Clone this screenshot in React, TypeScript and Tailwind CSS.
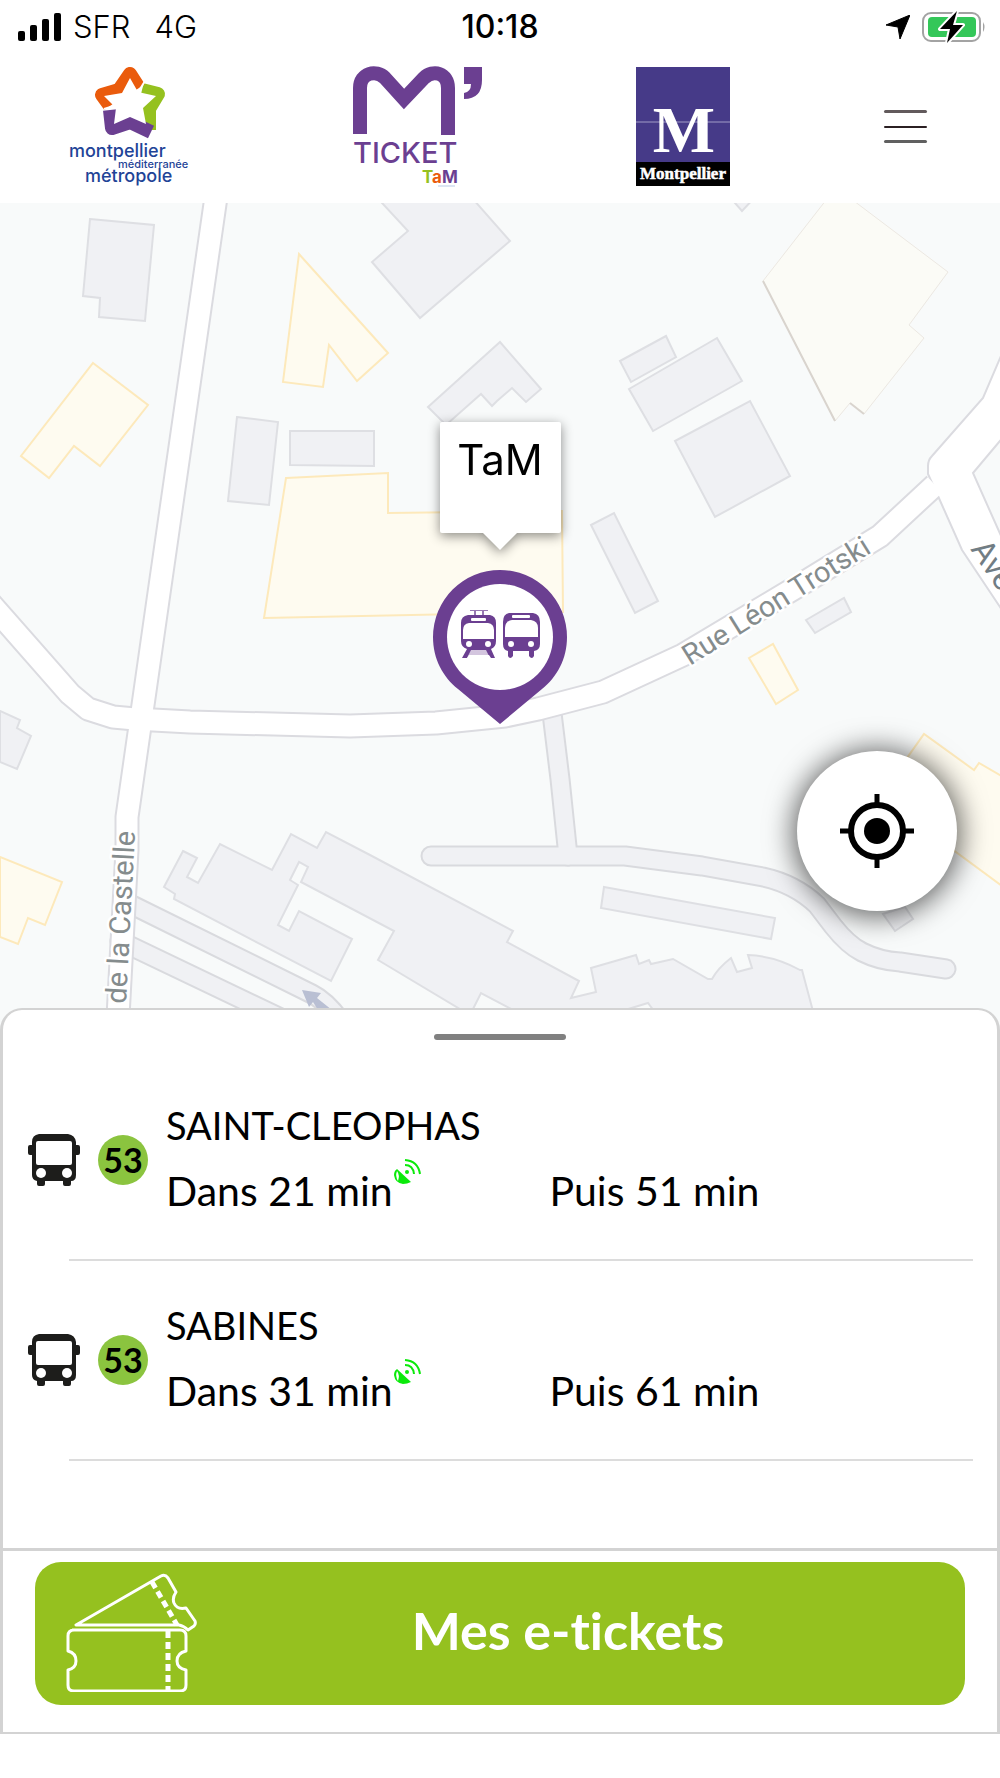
/**
 * Stop details screen: map with the selected stop on top, next
 * departures in a bottom sheet and the e-ticket shortcut below.
 */
interface Departure {
  id: string;
  line: string;
  destination: string;
  next: number;
  following: number;
}

const departures: Departure[] = [
  { id: 'saint-cleophas', line: '53', destination: 'SAINT-CLEOPHAS', next: 21, following: 51 },
  { id: 'sabines', line: '53', destination: 'SABINES', next: 31, following: 61 },
];

const greyBuildings = [
  'M90 219 L154 225 L145 321 L99 317 L100 298 L83 296 Z',
  'M370 190 L408 231 L372 262 L420 318 L510 241 L465 190 Z',
  'M237 417 L278 422 L269 505 L228 501 Z',
  'M290 431 H374 V466 L290 465 Z',
  'M428 407 L500 342 L541 389 L526 402 L512 388 L497 401 L492 406 L481 394 L446 425 Z',
  'M620 361 L666 336 L676 357 L631 382 Z',
  'M629 389 L717 338 L742 381 L653 431 Z',
  'M675 441 L750 401 L790 476 L715 517 Z',
  'M591 525 L614 513 L658 601 L635 613 Z',
  'M728 195 L742 211 L757 195 Z',
  'M806 620 L844 598 L851 612 L815 633 Z',
  'M0 711 L20 720 L17 728 L31 736 L17 769 L0 762 Z',
  'M604 887 L775 918 L771 939 L601 908 Z',
  'M883 914 L905 907 L913 919 L895 931 Z',
  'M183 851 L197 858 L187 877 L198 883 L220 844 L272 870 L291 834 L317 848 L326 832 L370 855 L513 931 L507 942 L579 981 L571 998 L596 992 L591 968 L636 955 L639 964 L649 960 L651 964 L673 959 L708 979 L712 979 Q718 968 731 958 L737 972 L752 968 L748 955 Q775 956 800 970 L802 970 L814 1015 H657 L648 1003 L625 1010 H513 L481 993 L470 1015 L378 960 L394 931 L301 882 L308 867 L299 862 L290 880 L298 885 L278 925 L289 931 L299 911 L352 939 L331 981 L174 899 L175 894 L164 887 Z',
];

const yellowBuildings = [
  'M93 363 L148 405 L100 466 L74 446 L49 478 L21 456 Z',
  'M299 254 L388 353 L357 381 L329 345 L323 387 L283 382 Z',
  'M286 478 L388 473 V513 L562 511 L563 612 L264 618 Z',
  'M749 658 L773 644 L798 690 L776 704 Z',
  'M0 857 L62 882 L45 925 L28 918 L18 944 L0 937 Z',
  'M1010 781 L979 763 L974 770 L924 734 L880 796 L1010 892 Z',
];

const mainRoads = [
  'M217 190 L158 600 L127 817 V850 L117 1035',
  'M-10 603 L70 694 L88 709 L113 717 L135 719 L190 722 L350 726 L436 723 L505 716 L538 709 L603 692 L683 655 L800 585 L880 536 L935 485',
];

const minorRoads = [
  'M551 705 L560 779 L568 856',
  'M431 856 H625 L702 866 L763 877 Q795 884 817 905 L833 926 Q848 945 862 952 Q880 961 900 962 L946 969',
  'M130 904 L312 994 Q326 1001 340 1020',
  'M120 941 L285 1020',
];

function StreetMap() {
  return (
    <svg
      viewBox="0 203 1000 827"
      preserveAspectRatio="xMidYMid slice"
      className="block w-full h-full"
      role="img"
      aria-label="Plan du quartier"
    >
      <rect x="-500" y="0" width="2000" height="1300" fill="#f8fafa" />
      <g fill="#f0f1f4" stroke="#dedfe3" strokeWidth="2">
        {greyBuildings.map((d) => (
          <path key={d} d={d} />
        ))}
      </g>
      <g fill="#fefbf0" stroke="#fde9bb" strokeWidth="2">
        {yellowBuildings.map((d) => (
          <path key={d} d={d} />
        ))}
      </g>
      <path
        d="M830 195 L763 281 L835 421 L850 403 L864 414 L924 338 L909 325 L948 272 L850 198 Z"
        fill="#fbfbf6"
        stroke="#ece8e2"
        strokeWidth="1"
      />
      <path d="M763 281 L835 421 M850 403 L864 414" fill="none" stroke="#d9d4ce" strokeWidth="2" />

      <g fill="none" strokeLinecap="round" strokeLinejoin="round">
        {minorRoads.map((d) => (
          <path key={d} d={d} stroke="#d9dade" strokeWidth="21" />
        ))}
        {minorRoads.map((d) => (
          <path key={d} d={d} stroke="#f0f1f4" strokeWidth="17" />
        ))}
      </g>

      {/* casings first so that crossings stay open */}
      <g fill="none" stroke="#dbdbe0" strokeWidth="25" strokeLinejoin="round">
        {mainRoads.map((d) => (
          <path key={d} d={d} />
        ))}
      </g>
      <path
        d="M928 474 V466 Q928 460 932 456 L983 398 L1010 335 V429 L973 473 L1010 556 V622 L962 550 L938 496 Z"
        fill="#ffffff"
        stroke="#dbdbe0"
        strokeWidth="2"
      />
      <g fill="none" stroke="#ffffff" strokeWidth="21" strokeLinejoin="round">
        {mainRoads.map((d) => (
          <path key={d} d={d} />
        ))}
      </g>

      <path d="M302 990 L321 993 L317 998 L332 1010 H318 L313 1002 L309 1007 Z" fill="#b9bfd3" />

      <g
        fontFamily="Roboto, 'Liberation Sans', sans-serif"
        fill="#858c8d"
        stroke="#ffffff"
        strokeWidth="5"
        strokeLinejoin="round"
        paintOrder="stroke"
      >
        <text transform="translate(690 666) rotate(-32)" fontSize="29">
          Rue Léon Trotski
        </text>
        <text transform="translate(126 1004) rotate(-87)" fontSize="29">
          de la Castelle
        </text>
        <text transform="translate(970 549) rotate(56)" fontSize="32" fill="#717d84">
          Ave
        </text>
      </g>
    </svg>
  );
}

function StopMarker() {
  return (
    <svg viewBox="0 0 134 154" className="w-[134px] h-[154px]" role="img" aria-label="Arrêt tram et bus">
      <path
        d="M67 0 A67 67 0 0 1 134 67 C134 89 124 107 109 119 L67 154 L25 119 C10 107 0 89 0 67 A67 67 0 0 1 67 0 Z"
        fill="#6b3f91"
      />
      <circle cx="67" cy="67" r="53" fill="#ffffff" />
      <g fill="#6b3f91">
        {/* tram */}
        <path d="M37 40 H55 V41 H51 V45 H49 V41 H43 V45 H41 V41 H37 Z" opacity="0.7" />
        <path d="M35 45 H57 Q63 46 63 53 V71 Q63 77 58 79 L62 88 H58 L56 85 H36 L34 88 H29 L34 79 Q28 77 28 71 V53 Q28 46 35 45 Z" />
        {/* bus */}
        <path d="M76 43 H100 Q107 44 107 52 V74 Q107 80 101 81 V86 Q99 90 96 86 V81 H80 V86 Q77 90 75 86 V81 Q70 80 70 74 V52 Q70 44 76 43 Z" />
      </g>
      <g fill="#ffffff">
        <rect x="38" y="48" width="15" height="3" rx="1" />
        <path d="M36 53 H55 Q61 54 61 60 V69 H30 V60 Q30 54 36 53 Z" />
        <circle cx="36" cy="74" r="3" />
        <circle cx="55" cy="74" r="3" />
        <path d="M38 80 H53 L57 88 H34 Z" opacity="0.7" />
        <rect x="79" y="45" width="18" height="3" rx="1" />
        <path d="M79 50 H98 Q105 51 105 58 V67 H72 V58 Q72 51 79 50 Z" />
        <circle cx="78" cy="74" r="3" />
        <circle cx="98" cy="74" r="3" />
      </g>
    </svg>
  );
}

function StatusBar() {
  return (
    <div className="grid grid-cols-3 items-center h-[54px] px-[18px] font-['Inter','Liberation_Sans',sans-serif] text-black">
      <div className="flex items-center gap-3">
        <svg viewBox="0 0 43 28" className="w-[43px] h-7" aria-hidden="true">
          <rect x="0" y="18" width="7" height="10" rx="2" />
          <rect x="12" y="12" width="7" height="16" rx="2" />
          <rect x="24" y="6" width="7" height="22" rx="2" />
          <rect x="36" y="0" width="7" height="28" rx="2" />
        </svg>
        <span className="text-[31px] leading-8 font-light">SFR</span>
        <span className="ml-3 text-[31px] leading-8 font-light">4G</span>
      </div>
      <p className="text-center text-[32px] leading-8 font-medium">10:18</p>
      <div className="flex items-center justify-end gap-3 -mr-1">
        <svg viewBox="0 0 24 24" className="w-6 h-6" aria-hidden="true">
          <path d="M24 0 L14 24 L12 12 L0 10 Z" stroke="#000000" strokeLinejoin="round" />
        </svg>
        <svg viewBox="0 0 64 32" className="w-16 h-8" aria-hidden="true">
          <rect x="1" y="2" width="57" height="28" rx="8" fill="none" stroke="#a3a3a3" strokeWidth="2" />
          <path d="M61 11 Q64 16 61 21 Z" fill="#a3a3a3" />
          <rect x="6" y="6" width="48" height="20" rx="4" fill="#34c759" />
          <path
            d="M35 0 L18 18 H28 L25 32 L41 14 H31 Z"
            stroke="#ffffff"
            strokeWidth="4"
            strokeLinejoin="round"
            paintOrder="stroke"
          />
        </svg>
      </div>
    </div>
  );
}

function MetropoleLogo() {
  return (
    <svg
      viewBox="69 66 130 122"
      className="w-[130px] h-[122px]"
      role="img"
      aria-label="Montpellier Méditerranée Métropole"
    >
      <g fill="none" strokeWidth="14" strokeLinejoin="round">
        <path d="M142 90 L158 94 L149 109 L149 130" stroke="#95c11f" />
        <path d="M110 110 L112 128 L130 122 L151 132" stroke="#6b3f91" />
        <path d="M110 106 L102 95 L119 90 L130 74 L139 88" stroke="#ea5b0c" />
      </g>
      <path d="M104 109 L117 105 M145 81 L137 94" stroke="#ffffff" strokeWidth="2" />
      <path
        d="M130 78 L138 92 L156 96 L143 108 L146 124 L130 117 L114 124 L116 108 L104 96 L122 93 Z"
        fill="#ffffff"
      />
      <g fontFamily="Inter, sans-serif" fontWeight="500" fill="#1f4497">
        <text x="69" y="157" fontSize="18">
          montpellier
        </text>
        <text x="118" y="168" fontSize="11">
          méditerranée
        </text>
        <text x="85" y="182" fontSize="18">
          métropole
        </text>
      </g>
    </svg>
  );
}

function TicketLogo() {
  return (
    <svg viewBox="354 66 129 122" className="w-[129px] h-[122px]" role="img" aria-label="M'Ticket TaM">
      <path
        d="M361 134 V88 C361 73 377 69 386 78 L405 99 L425 78 C434 69 449 73 449 88 V135"
        fill="none"
        stroke="#6b3f91"
        strokeWidth="14"
      />
      <path d="M465 67 H483 V80 Q483 99 465 99 V93 Q472 92 472 84 H465 Z" fill="#6b3f91" />
      <g fontFamily="Inter, sans-serif">
        <text x="354" y="163" fontSize="29" fontWeight="500" fill="#6b3f91">
          TICKET
        </text>
        <text x="423" y="183" fontSize="17" fontWeight="700">
          <tspan fill="#95c11f">T</tspan>
          <tspan fill="#ea5b0c">a</tspan>
          <tspan fill="#6b3f91">M</tspan>
        </text>
      </g>
      <path d="M439 186 H456" stroke="#b9cbe6" strokeWidth="1" />
    </svg>
  );
}

function CityLogo() {
  return (
    <svg viewBox="634 67 94 119" className="w-[94px] h-[119px]" role="img" aria-label="Ville de Montpellier">
      <rect x="634" y="67" width="94" height="95" fill="#463a88" />
      <path d="M634 122 H728" stroke="#a19bc6" strokeWidth="1" />
      <rect x="634" y="162" width="94" height="24" fill="#000000" />
      <g fontFamily="'Liberation Serif', serif" fontWeight="700" fill="#ffffff" textAnchor="middle">
        <text x="682" y="152" fontSize="66">
          M
        </text>
        <text x="681" y="179" fontSize="17" stroke="#ffffff" strokeWidth="0.5">
          Montpellier
        </text>
      </g>
    </svg>
  );
}

function BusIcon() {
  return (
    <svg viewBox="0 0 52 52" className="w-[52px] h-[52px] shrink-0" role="img" aria-label="Bus">
      <path
        d="M11 0 H40 Q47 1 48 8 V11 H50 Q52 11 52 13 V19 Q52 21 50 21 H48 V41 Q48 47 43 47 V50 Q43 52 41 52 H37 Q35 52 35 50 V47 H17 V50 Q17 52 15 52 H11 Q9 52 9 50 V47 Q4 46 4 41 V21 H2 Q0 21 0 19 V13 Q0 11 2 11 H4 V8 Q4 1 11 0 Z"
        fill="#1d1d1b"
      />
      <rect x="8" y="7" width="36" height="24" rx="2" fill="#ffffff" />
      <circle cx="13" cy="39" r="5" fill="#ffffff" />
      <circle cx="39" cy="39" r="5" fill="#ffffff" />
    </svg>
  );
}

function LiveIcon() {
  return (
    <svg viewBox="0 0 28 28" className="w-7 h-7" role="img" aria-label="Temps réel">
      <path d="M4 11 L18 24 Q14 26 10 26 Q2 25 1 17 Q1 13 4 11 Z" fill="#0bea0b" />
      <path d="M4 13 Q7 17 5 23 Q2 18 4 13 Z" fill="#ffffff" />
      <circle cx="14" cy="14" r="2" fill="#0bea0b" />
      <path d="M12 7 Q20 7 21 16 M12 2 Q25 3 27 16" fill="none" stroke="#0bea0b" strokeWidth="2" />
    </svg>
  );
}

function TicketsIcon() {
  return (
    <svg
      viewBox="0 0 132 120"
      className="w-[132px] h-[120px]"
      fill="none"
      stroke="#ffffff"
      strokeWidth="3"
      strokeLinejoin="round"
      aria-hidden="true"
    >
      <path d="M7 58 H115 Q121 58 121 64 V79 Q112 81 112 89 Q112 96 121 98 V113 Q121 119 115 119 H9 Q3 119 3 113 V98 Q11 96 11 89 Q11 81 3 79 V64 Q3 58 9 58" />
      <path d="M11 53 H114 Q119 54 123 58 L129 54 Q131 52 130 49 L121 36 Q112 38 109 31 Q107 26 111 20 L103 6 Q100 2 96 4 Z" />
      <g strokeWidth="5" strokeDasharray="7 4" strokeLinejoin="miter">
        <path d="M103 59 V119" />
        <path d="M87 10 L112 53" />
      </g>
    </svg>
  );
}

function renderDeparture(departure: Departure) {
  return (
    <li key={departure.id} className="h-[200px] pl-[66px] pr-6">
      <div className="flex items-center h-full border-b-2 border-[#dcdcdc]">
        <div className="flex items-center gap-[18px] -ml-[41px] shrink-0">
          <BusIcon />
          <span className="flex items-center justify-center w-[50px] h-[50px] rounded-full bg-[#8bc43f] text-[34px] leading-8 font-bold">
            {departure.line}
          </span>
        </div>
        <div className="flex-1 min-w-0 ml-[18px] pb-1">
          <p className="text-[38px] leading-[66px]">{departure.destination}</p>
          <div className="grid grid-cols-2 pr-10 text-[41px] leading-[66px]">
            <p className="flex items-start whitespace-nowrap">
              Dans {departure.next} min
              <LiveIcon />
            </p>
            <p className="whitespace-nowrap">Puis {departure.following} min</p>
          </div>
        </div>
      </div>
    </li>
  );
}

export default function App() {
  return (
    <div className="min-h-screen bg-white text-black font-['Lato','Open_Sans',sans-serif]">
      <StatusBar />
      <header className="flex items-center justify-between h-[149px] pl-[69px] pr-[73px] pb-1">
        <MetropoleLogo />
        <TicketLogo />
        <CityLogo />
        <button type="button" aria-label="Menu" className="flex flex-col justify-between w-[43px] h-[33px]">
          <span className="block w-full h-[3px] rounded-full bg-[#625a5c]" />
          <span className="block w-full h-[2px] rounded-full bg-[#2b2023]" />
          <span className="block w-full h-[3px] rounded-full bg-[#606060]" />
        </button>
      </header>

      <section className="relative h-[827px] overflow-hidden">
        <StreetMap />
        <div className="absolute top-[219px] left-1/2 -translate-x-1/2 flex flex-col items-center gap-[37px]">
          <div className="relative w-[121px] h-[111px] pt-3 rounded-xs bg-white text-center drop-shadow-[0_3px_6px_rgba(0,0,0,0.45)]">
            <p className="font-['Inter','Liberation_Sans',sans-serif] text-[42px] leading-[52px]">TaM</p>
            <span className="absolute -bottom-3 left-1/2 -translate-x-1/2 w-6 h-6 rotate-45 bg-white" />
          </div>
          <StopMarker />
        </div>
        <button
          type="button"
          aria-label="Me localiser"
          className="absolute top-[548px] right-[43px] flex items-center justify-center w-40 h-40 rounded-full bg-white shadow-[0_2px_28px_4px_rgba(0,0,0,0.6)]"
        >
          <svg viewBox="0 0 74 74" className="w-[74px] h-[74px]" fill="none" stroke="#000000" aria-hidden="true">
            <circle cx="37" cy="37" r="26" strokeWidth="6" />
            <circle cx="37" cy="37" r="13" fill="#000000" stroke="none" />
            <path d="M37 0 V9 M37 65 V74 M0 37 H9 M65 37 H74" strokeWidth="5" />
          </svg>
        </button>
      </section>

      <main className="relative -mt-[22px] rounded-t-[22px] border-x-[3px] border-y-2 border-[#d3d3d3] bg-white">
        <div className="mx-auto w-[132px] h-[6px] mt-6 rounded-full bg-[#808080]" />
        <ul className="pt-[21px] pb-[87px]">{departures.map(renderDeparture)}</ul>
        <div className="pt-[11px] pb-[27px] px-8 border-t-[3px] border-[#d3d3d3]">
          <button
            type="button"
            className="flex items-center w-full h-[143px] pl-[30px] pr-[26px] pb-1 rounded-[26px] bg-[#95c11f] text-white"
          >
            <TicketsIcon />
            <span className="flex-1 text-center text-[52px] leading-[60px] pb-1 font-bold [font-variant-ligatures:none]">
              Mes e-tickets
            </span>
          </button>
        </div>
      </main>
    </div>
  );
}
